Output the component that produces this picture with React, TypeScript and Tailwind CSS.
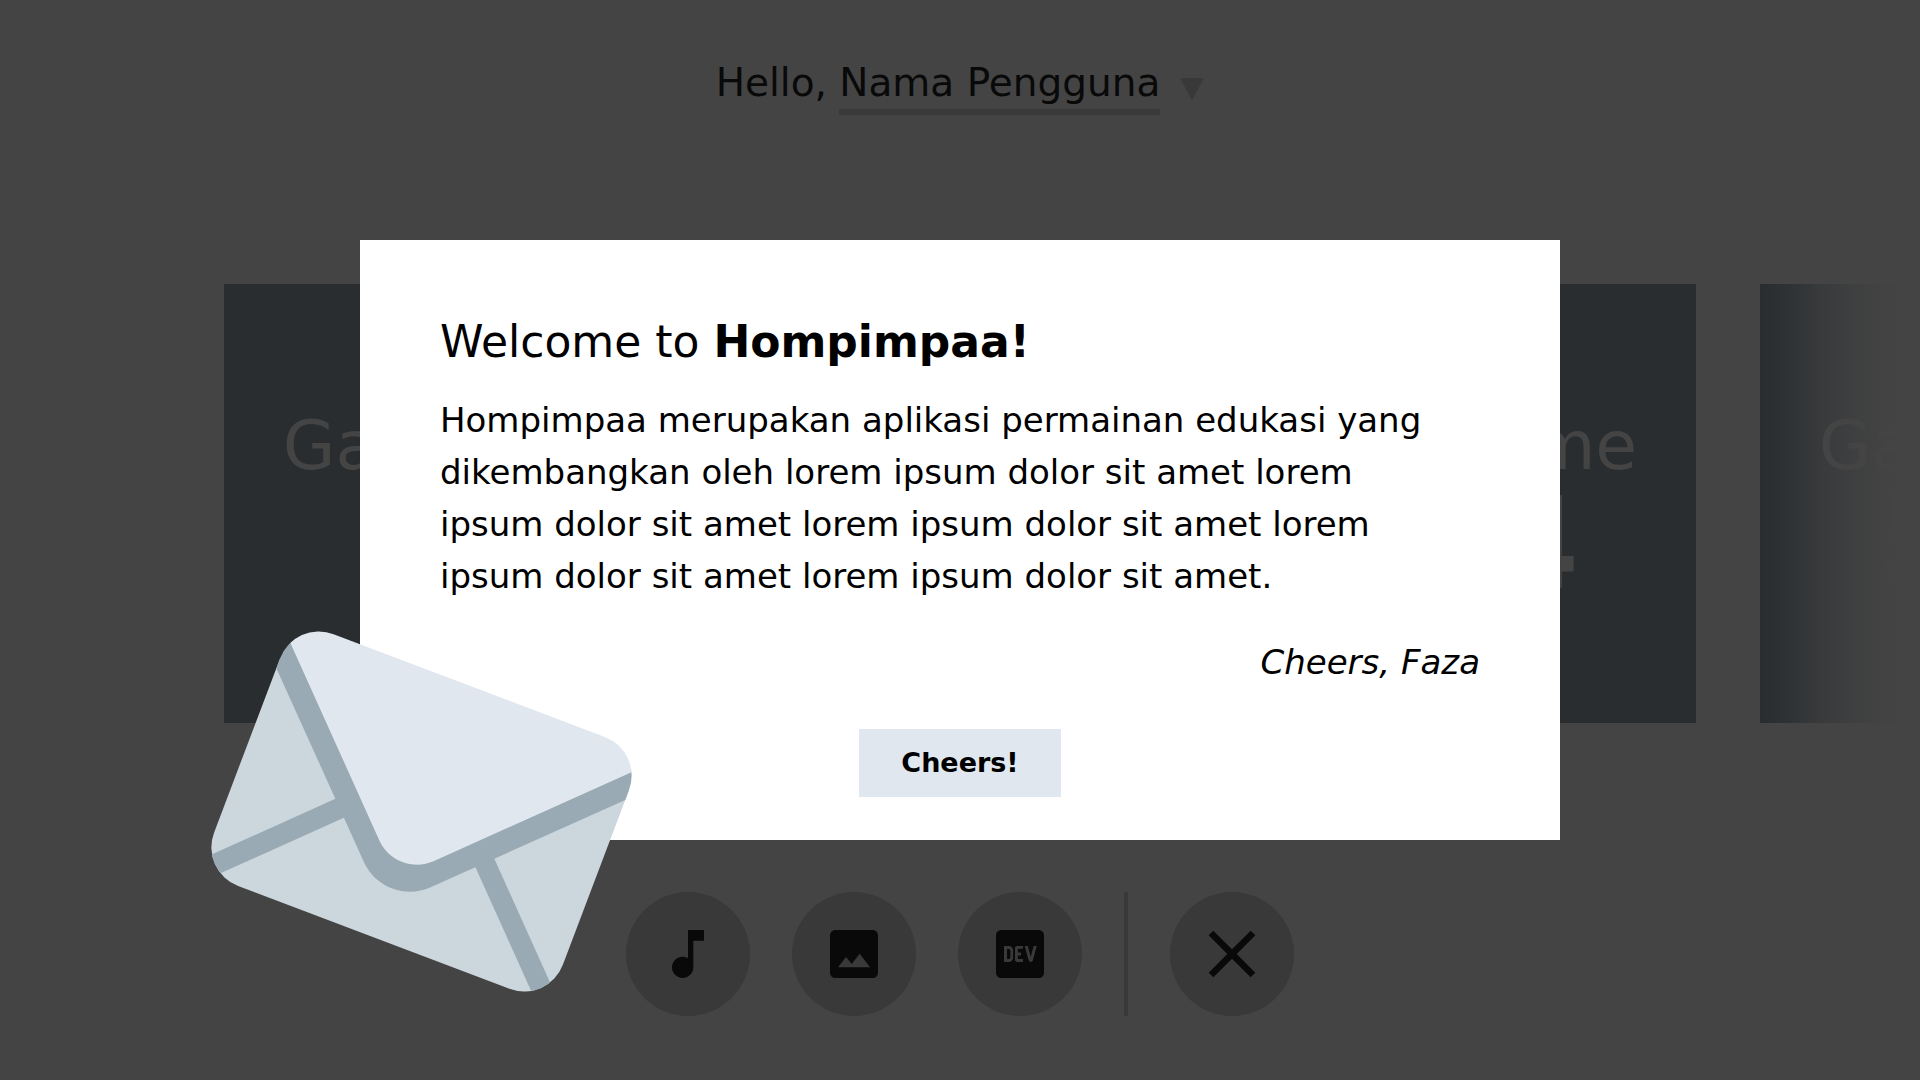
import type { ReactNode } from "react";
import { MdClose, MdLogoDev, MdMusicNote } from "react-icons/md";

const games = [1, 2, 3, 4, 5];

function GameCard({ number }: { number: number }) {
  return (
    <article className="flex h-[439px] w-80 shrink-0 flex-col items-center bg-[#292d30] pt-[120px] text-[#444444]">
      <h2 className="text-[68px] leading-[84px]">Game</h2>
      <p className="font-['Inter',sans-serif] text-[128px] leading-[108px] font-bold">{number}</p>
    </article>
  );
}

function RoundButton({ label, children }: { label: string; children: ReactNode }) {
  return (
    <button
      type="button"
      aria-label={label}
      className="flex size-[124px] items-center justify-center rounded-full bg-[#393939] text-[#090909]"
    >
      {children}
    </button>
  );
}

function PictureIcon() {
  return (
    <svg viewBox="0 0 24 24" className="size-16" fill="currentColor" aria-hidden="true">
      <path
        fillRule="evenodd"
        d="M5 3h14c1.1 0 2 .9 2 2v14c0 1.1-.9 2-2 2H5c-1.1 0-2-.9-2-2V5c0-1.1.9-2 2-2zM14.14 11.86l-3 3.87L9 13.14 6 17h12l-3.86-5.14z"
      />
    </svg>
  );
}

function Envelope() {
  return (
    <svg
      viewBox="0 0 36 36"
      className="pointer-events-none absolute -bottom-[158px] -left-[125px] size-[373px] overflow-visible"
      aria-hidden="true"
    >
      <defs>
        <clipPath id="envelope-outline">
          <rect x="0" y="5" width="36" height="26" rx="4" />
        </clipPath>
      </defs>
      <g transform="rotate(20.75 18 18)">
        <g clipPath="url(#envelope-outline)">
          <path fill="#CCD6DD" d="M-3 34V6l18 18h6L39 6v28z" />
          <path
            stroke="#99AAB5"
            strokeWidth="2"
            fill="none"
            d="M13.36 17.64L-2 33M22.64 17.64L38 33"
          />
          <path
            fill="#99AAB5"
            d="M-3 3.5v3.54l17.528 17.486c1.894 1.893 4.988 1.893 6.884 0L39 7.02V3.5l-18 18h-6z"
          />
          <path
            fill="#E0E7EE"
            d="M-3 2v1.87l18.171 18.172c1.562 1.562 4.096 1.562 5.657 0L39 3.87V2z"
          />
        </g>
      </g>
    </svg>
  );
}

function WelcomeDialog() {
  return (
    <div className="absolute inset-0 flex items-center justify-center">
      <section
        role="dialog"
        aria-modal="true"
        aria-labelledby="welcome-title"
        className="relative flex w-[1200px] max-w-full flex-col bg-white px-20 pt-[76px] pb-[43px] text-black"
      >
        <h1 id="welcome-title" className="text-[44px] leading-[52px] font-normal">
          Welcome to <strong className="font-bold">Hompimpaa!</strong>
        </h1>
        <p className="mt-[26px] text-[34px] leading-[52px]">
          Hompimpaa merupakan aplikasi permainan edukasi yang
          <br />
          dikembangkan oleh lorem ipsum dolor sit amet lorem
          <br />
          ipsum dolor sit amet lorem ipsum dolor sit amet lorem
          <br />
          ipsum dolor sit amet lorem ipsum dolor sit amet.
        </p>
        <p className="mt-[34px] text-right text-[34px] leading-[52px] italic">Cheers, Faza</p>
        <button
          type="button"
          className="mt-[41px] h-[68px] w-[202px] self-center bg-[#e0e7ee] text-[27px] font-bold"
        >
          Cheers!
        </button>
        <Envelope />
      </section>
    </div>
  );
}

export default function App() {
  return (
    <div className="relative flex min-h-screen flex-col overflow-hidden bg-[#444444] font-['DejaVu_Sans',sans-serif]">
      <header className="flex items-start justify-center pt-[57px] text-[39px] leading-[52px] text-[#090909]">
        <span className="whitespace-pre">Hello, </span>
        <button type="button" className="flex items-start gap-5">
          <span className="border-b-6 border-[#393939]">Nama Pengguna</span>
          <svg viewBox="0 0 24 22" className="mt-[21px] h-[22px] w-6" aria-hidden="true">
            <path d="M0 0h24L12 22z" fill="#393939" />
          </svg>
        </button>
      </header>

      <main className="relative mt-[169px] flex gap-16 overflow-hidden pl-56">
        {games.map((n) => (
          <GameCard key={n} number={n} />
        ))}
        <div className="absolute inset-y-0 right-0 w-40 bg-[linear-gradient(to_right,#44444400,#44444430_16%,#44444490_38%,#444444d0_60%,#444444f4_80%,#444444)]" />
      </main>

      <footer className="mt-auto flex justify-center gap-[42px] pb-16">
        <RoundButton label="Music">
          <MdMusicNote className="size-16" />
        </RoundButton>
        <RoundButton label="Gallery">
          <PictureIcon />
        </RoundButton>
        <RoundButton label="Developer">
          <MdLogoDev className="size-16" />
        </RoundButton>
        <div className="w-1 bg-[#393939]" />
        <RoundButton label="Close">
          <MdClose className="size-20" />
        </RoundButton>
      </footer>

      <WelcomeDialog />
    </div>
  );
}
